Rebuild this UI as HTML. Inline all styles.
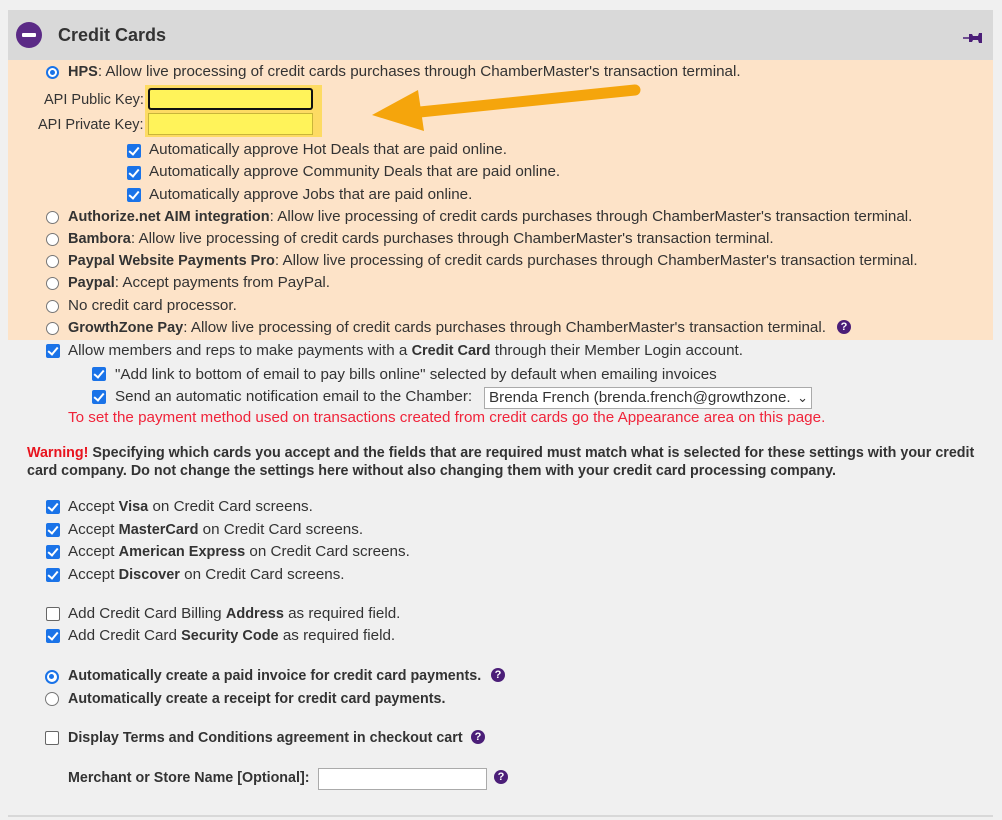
<!DOCTYPE html>
<html><head><meta charset="utf-8"><style>
html,body{margin:0;padding:0;}
body{width:1002px;height:820px;background:#f0f0f0;position:relative;overflow:hidden;font-family:"Liberation Sans",Arial,sans-serif;font-size:15.2px;color:#333;}
.l{position:absolute;white-space:nowrap;line-height:18px;}
b{font-weight:bold;color:#333;font-size:14.5px}
.bl{font-weight:bold;font-size:14.3px}
.r{position:absolute;width:13px;height:13px;border:1px solid #777;border-radius:50%;background:#fff;box-sizing:border-box;}
.r.on{border:2px solid #1a73e8;}
.r.on::after{content:"";position:absolute;left:2px;top:2px;width:5px;height:5px;border-radius:50%;background:#1a73e8;}
.c{position:absolute;width:14px;height:14px;border-radius:2px;background:#1a73e8;box-sizing:border-box;}
.c::after{content:"";position:absolute;left:4px;top:1px;width:4px;height:8px;border:solid #fff;border-width:0 2px 2px 0;transform:rotate(40deg);}
.c.off{background:#fff;border:1px solid #666;}
.c.off::after{display:none}
.q{position:absolute;width:14px;height:14px;border-radius:50%;background:#4b1e78;color:#fff;font-size:11px;font-weight:bold;text-align:center;line-height:14px;}
</style></head><body>
<div style="position:absolute;left:8px;top:10px;width:985px;height:50px;background:#d9d9d9;"></div>
<div style="position:absolute;left:8px;top:60px;width:985px;height:280px;background:#fde3c8;"></div>
<div style="position:absolute;left:16px;top:22px;width:26px;height:26px;border-radius:50%;background:#5b2a86;"></div>
<div style="position:absolute;left:22px;top:33px;width:14px;height:4px;background:#fff;border-radius:1px;"></div>
<div class="l" style="left:58px;top:24px;font-size:18px;line-height:22px;font-weight:bold;color:#333">Credit Cards</div>
<svg style="position:absolute;left:962px;top:30px" width="22" height="16" viewBox="0 0 22 16"><path d="M1 8 H8" stroke="#4b1e78" stroke-width="1.5"/><path d="M7 4 H10 L11 6 H16 L17 3 H20 V13 H17 L16 10 H11 L10 12 H7 Z" fill="#4b1e78"/></svg>

<div class="r on" style="left:46px;top:66px"></div>
<div class="l" style="left:68px;top:63px"><b>HPS</b>: Allow live processing of credit cards purchases through ChamberMaster's transaction terminal.</div>
<div style="position:absolute;left:145px;top:85px;width:177px;height:52px;background:#fcd84a;opacity:.8"></div>
<div class="l" style="left:44px;top:91px;font-size:14.5px">API Public Key:</div>
<div style="position:absolute;left:148px;top:88px;width:165px;height:22px;background:#fff35a;border:2px solid #111;border-radius:3px;box-sizing:border-box"></div>
<div class="l" style="left:38px;top:116px;font-size:14.5px">API Private Key:</div>
<div style="position:absolute;left:148px;top:113px;width:165px;height:22px;background:#fff35a;border:1px solid #c9b53a;box-sizing:border-box"></div>
<svg style="position:absolute;left:360px;top:75px" width="300" height="60"><path d="M275 15 L50 38" stroke="#f5a50c" stroke-width="11" stroke-linecap="round"/><path d="M12 40 L58 15 L64 56 Z" fill="#f5a50c"/></svg>

<div class="c" style="left:127px;top:144px"></div><div class="l" style="left:149px;top:141px">Automatically approve Hot Deals that are paid online.</div>
<div class="c" style="left:127px;top:166px"></div><div class="l" style="left:149px;top:163px">Automatically approve Community Deals that are paid online.</div>
<div class="c" style="left:127px;top:188px"></div><div class="l" style="left:149px;top:186px">Automatically approve Jobs that are paid online.</div>

<div class="r" style="left:46px;top:211px"></div><div class="l" style="left:68px;top:208px"><b>Authorize.net AIM integration</b>: Allow live processing of credit cards purchases through ChamberMaster's transaction terminal.</div>
<div class="r" style="left:46px;top:233px"></div><div class="l" style="left:68px;top:230px"><b>Bambora</b>: Allow live processing of credit cards purchases through ChamberMaster's transaction terminal.</div>
<div class="r" style="left:46px;top:255px"></div><div class="l" style="left:68px;top:252px"><b>Paypal Website Payments Pro</b>: Allow live processing of credit cards purchases through ChamberMaster's transaction terminal.</div>
<div class="r" style="left:46px;top:277px"></div><div class="l" style="left:68px;top:274px"><b>Paypal</b>: Accept payments from PayPal.</div>
<div class="r" style="left:46px;top:300px"></div><div class="l" style="left:68px;top:297px">No credit card processor.</div>
<div class="r" style="left:46px;top:322px"></div><div class="l" style="left:68px;top:319px"><b>GrowthZone Pay</b>: Allow live processing of credit cards purchases through ChamberMaster's transaction terminal.</div>
<div class="q" style="left:837px;top:320px">?</div>

<div class="c" style="left:46px;top:344px"></div><div class="l" style="left:68px;top:342px">Allow members and reps to make payments with a <b>Credit Card</b> through their Member Login account.</div>
<div class="c" style="left:92px;top:367px"></div><div class="l" style="left:115px;top:366px">"Add link to bottom of email to pay bills online" selected by default when emailing invoices</div>
<div class="c" style="left:92px;top:390px"></div><div class="l" style="left:115px;top:388px">Send an automatic notification email to the Chamber:</div>
<div style="position:absolute;left:484px;top:387px;width:328px;height:22px;background:#fff;border:1px solid #aaa;box-sizing:border-box;overflow:hidden"><span class="l" style="left:4px;top:1px">Brenda French (brenda.french@growthzone.</span><span class="l" style="right:3px;top:1px;background:#fff;font-size:13px">&#x2304;</span></div>
<div class="l" style="left:68px;top:409px;color:#f0243a">To set the payment method used on transactions created from credit cards go the Appearance area on this page.</div>

<div class="l" style="left:27px;top:444px;font-weight:bold;font-size:14.3px;"><span style="color:#e8141e">Warning!</span> Specifying which cards you accept and the fields that are required must match what is selected for these settings with your credit</div>
<div class="l" style="left:27px;top:462px;font-weight:bold;font-size:14.3px;">card company. Do not change the settings here without also changing them with your credit card processing company.</div>

<div class="c" style="left:46px;top:500px"></div><div class="l" style="left:68px;top:498px">Accept <b>Visa</b> on Credit Card screens.</div>
<div class="c" style="left:46px;top:523px"></div><div class="l" style="left:68px;top:521px">Accept <b>MasterCard</b> on Credit Card screens.</div>
<div class="c" style="left:46px;top:545px"></div><div class="l" style="left:68px;top:543px">Accept <b>American Express</b> on Credit Card screens.</div>
<div class="c" style="left:46px;top:568px"></div><div class="l" style="left:68px;top:566px">Accept <b>Discover</b> on Credit Card screens.</div>

<div class="c off" style="left:46px;top:607px"></div><div class="l" style="left:68px;top:605px">Add Credit Card Billing <b>Address</b> as required field.</div>
<div class="c" style="left:46px;top:629px"></div><div class="l" style="left:68px;top:627px">Add Credit Card <b>Security Code</b> as required field.</div>

<div class="r on" style="left:45px;top:670px;width:14px;height:14px"></div><div class="l bl" style="left:68px;top:667px">Automatically create a paid invoice for credit card payments.</div>
<div class="q" style="left:491px;top:668px">?</div>
<div class="r" style="left:45px;top:692px;width:14px;height:14px"></div><div class="l bl" style="left:68px;top:690px">Automatically create a receipt for credit card payments.</div>

<div class="c off" style="left:45px;top:731px"></div><div class="l bl" style="left:68px;top:729px">Display Terms and Conditions agreement in checkout cart</div>
<div class="q" style="left:471px;top:730px">?</div>
<div class="l bl" style="left:68px;top:769px">Merchant or Store Name [Optional]:</div>
<div style="position:absolute;left:318px;top:768px;width:169px;height:22px;background:#fff;border:1px solid #aaa;box-sizing:border-box"></div>
<div class="q" style="left:494px;top:770px">?</div>
<div style="position:absolute;left:8px;top:815px;width:985px;height:2px;background:#d8d8d8"></div>
</body></html>
